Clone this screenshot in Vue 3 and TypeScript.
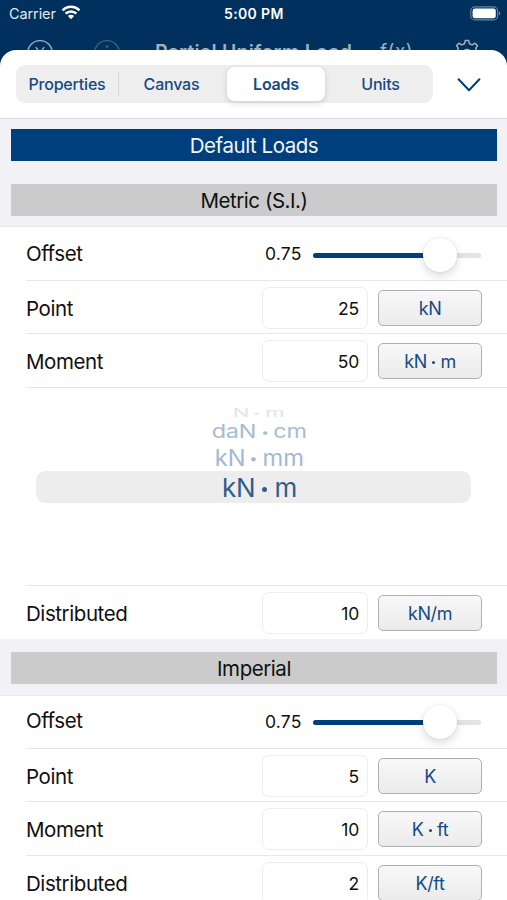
<script setup lang="ts">
import { ref } from 'vue'

interface LoadRow {
  label: string
  value: string
  unit: string[]
  picker?: boolean
}

interface LoadGroup {
  title: string
  offset: number
  rows: LoadRow[]
}

const tabs = ['Properties', 'Canvas', 'Loads', 'Units']
const active = ref('Loads')

const pickerItems = [
  { parts: ['N', 'm'], cls: 'far' },
  { parts: ['daN', 'cm'], cls: 'mid' },
  { parts: ['kN', 'mm'], cls: 'near' },
  { parts: ['kN', 'm'], cls: 'chosen' },
]

const groups: LoadGroup[] = [
  {
    title: 'Metric (S.I.)',
    offset: 0.75,
    rows: [
      { label: 'Point', value: '25', unit: ['kN'] },
      { label: 'Moment', value: '50', unit: ['kN', 'm'], picker: true },
      { label: 'Distributed', value: '10', unit: ['kN/m'] },
    ],
  },
  {
    title: 'Imperial',
    offset: 0.75,
    rows: [
      { label: 'Point', value: '5', unit: ['K'] },
      { label: 'Moment', value: '10', unit: ['K', 'ft'] },
      { label: 'Distributed', value: '2', unit: ['K/ft'] },
    ],
  },
]
</script>

<template>
  <div class="screen">
    <header class="status">
      <span class="carrier">Carrier</span>
      <svg class="wifi" width="20" height="15" viewBox="0 0 20 15">
        <g fill="none" stroke="#fff" stroke-width="2.5">
          <path d="M1.5 5.3a12.2 12.2 0 0 1 17 0" />
          <path d="M4.6 8.7a7.6 7.6 0 0 1 10.8 0" />
        </g>
        <path d="M10 14.3 6.9 11.1a4.4 4.4 0 0 1 6.2 0z" fill="#fff" />
      </svg>
      <span class="time">5:00 PM</span>
      <svg class="battery" width="31" height="15" viewBox="0 0 31 15">
        <rect x="0.8" y="0.9" width="26.8" height="13" rx="4" fill="none" stroke="#6c849c" stroke-width="1.1" />
        <rect x="2.6" y="2.6" width="23.2" height="9.6" rx="2.3" fill="#fff" />
        <path d="M28.8 5.2v4.4q1.5-.6 1.5-2.2t-1.5-2.2z" fill="#6c849c" />
      </svg>
    </header>

    <nav class="navbar">
      <svg class="close" width="28" height="28" viewBox="0 0 28 28" fill="none" stroke="#a3afba" stroke-width="1.4">
        <circle cx="14" cy="14" r="12.4" />
        <path d="m9.8 8.2 8.4 11.6M18.2 8.2 9.8 19.8" />
      </svg>
      <svg class="info" width="28" height="28" viewBox="0 0 28 28" fill="none" stroke="#3f607e" stroke-width="1.4">
        <circle cx="14" cy="14" r="12.4" />
        <circle cx="14" cy="7.6" r="0.7" fill="#3f607e" />
        <path d="M14 12v8" />
      </svg>
      <span class="title">Partial Uniform Load</span>
      <span class="fx">f(x)</span>
      <svg class="gear" width="28" height="28" viewBox="0 0 28 28" fill="none" stroke="#a3afba" stroke-width="1.5" stroke-linejoin="round">
        <path d="M11.5 4.8 12.3 1.6h3.4l.8 3.2 2.7 1.1 2.8-1.7 2.4 2.4-1.7 2.8 1.1 2.7 3.2.8v3.2l-3.2.8-1.1 2.7 1.7 2.8-2.4 2.4-2.8-1.7-2.7 1.1-.8 3.2h-3.4l-.8-3.2-2.7-1.1L6 24.8l-2.4-2.4 1.7-2.8-1.1-2.7-3.2-.8v-3.2l3.2-.8 1.1-2.7-1.7-2.8L6 4.2l2.8 1.7z" />
        <circle cx="14" cy="14.5" r="4" />
      </svg>
    </nav>

    <main class="sheet">
      <div class="toolbar">
        <div class="segments">
          <button
            v-for="tab in tabs"
            :key="tab"
            class="segment"
            :class="{ active: tab === active }"
            @click="active = tab"
          >{{ tab }}</button>
        </div>
        <svg class="chevron" width="24" height="14" viewBox="0 0 24 14" fill="none" stroke="#003f7f" stroke-width="2" stroke-linecap="round" stroke-linejoin="round">
          <path d="m1.6 1.3 10.4 11 10.4-11" />
        </svg>
      </div>

      <div class="banner">
        <h1>Default Loads</h1>
      </div>

      <section v-for="(group, g) in groups" :key="group.title" class="group" :class="{ later: g > 0 }">
        <div class="band"><h2>{{ group.title }}</h2></div>
        <div class="row offset">
          <span class="label">Offset</span>
          <span class="amount">{{ group.offset }}</span>
          <div class="slider">
            <div class="fill" :style="{ width: group.offset * 100 + '%' }"></div>
            <div class="thumb"></div>
          </div>
        </div>
        <template v-for="row in group.rows" :key="row.label">
          <div class="row" :class="row.label.toLowerCase()">
            <span class="label">{{ row.label }}</span>
            <span class="field">{{ row.value }}</span>
            <button class="unit">
              <template v-for="(part, i) in row.unit" :key="i"><i v-if="i > 0" class="dot"></i><span>{{ part }}</span></template>
            </button>
          </div>
          <div v-if="row.picker" class="picker">
            <div v-for="item in pickerItems" :key="item.cls" class="option" :class="item.cls">
              <div class="scaled"><span>{{ item.parts[0] }}</span><i class="dot"></i><span>{{ item.parts[1] }}</span></div>
            </div>
          </div>
        </template>
      </section>
    </main>
  </div>
</template>

<style>
body {
  overflow: hidden;
}
</style>

<style scoped>
.screen {
  width: 507px;
  height: 900px;
  overflow: hidden;
  display: flex;
  flex-direction: column;
  background: #00305d;
  color: #101010;
  font-family: Inter, "Liberation Sans", sans-serif;
}
.screen * {
  box-sizing: border-box;
}
button {
  font-family: inherit;
  border: 0;
  padding: 0;
}
.status {
  height: 28px;
  flex: none;
  display: grid;
  grid-template-columns: 52px 165px 1fr 31px;
  align-items: center;
  padding: 0 6px 2px 9px;
  color: #fff;
  font-size: 14.5px;
}
.carrier {
  letter-spacing: -0.1px;
  color: #e3e9ee;
}
.wifi {
  margin-top: -1px;
}
.time {
  font-weight: 600;
  font-size: 14px;
  letter-spacing: 0.35px;
  margin-left: -2px;
}
.navbar {
  flex: none;
  height: 22px;
  overflow: hidden;
  display: grid;
  grid-template-columns: 66.5px 62.5px 225px 72.5px 28px;
  padding: 11px 0 0 26px;
  color: #a3afba;
}
.title {
  font-size: 19.5px;
  line-height: 26px;
  font-weight: 600;
  letter-spacing: 0.25px;
  white-space: nowrap;
}
.fx {
  font-size: 19px;
  line-height: 25px;
  letter-spacing: 0.5px;
}
.sheet {
  flex: 1;
  min-height: 0;
  overflow: hidden;
  background: #fff;
  border-radius: 16px 16px 0 0;
}
.toolbar {
  height: 69px;
  border-bottom: 1px solid #dcdcde;
  display: flex;
  padding: 15px 0 0 16px;
}
.segments {
  width: 417px;
  height: 38px;
  border-radius: 9px;
  background: #eeeeef;
  display: grid;
  grid-template-columns: 103px 105px 104px 105px;
  padding: 2px 0;
}
.segment {
  background: transparent;
  color: #164a84;
  font-size: 16px;
  font-weight: 500;
  letter-spacing: -0.2px;
}
.segment:first-child {
  border-right: 1px solid #d4d4d6;
  height: 22px;
  margin-top: 6px;
}
.segment.active {
  width: 98px;
  height: 34px;
  margin-left: 3px;
  border-radius: 8px;
  background: #fff;
  font-weight: 600;
  box-shadow: 0 2px 6px rgba(0, 0, 0, 0.15);
}
.chevron {
  margin: 13px 0 0 24px;
}
.banner {
  background: #f1f1f6;
  padding: 10px 10px 9px 11px;
}
h1,
h2 {
  margin: 0;
  height: 32px;
  line-height: 34px;
  font-size: 20.5px;
  font-weight: 400;
  letter-spacing: -0.45px;
  text-align: center;
}
h1 {
  background: #003f7e;
  color: #f2f6fa;
}
h2 {
  background: #cbcbcb;
}
.band {
  height: 57px;
  padding: 14px 10px 0 11px;
  background: #f1f1f6;
  border-bottom: 1px solid #e9e9ec;
}
.later .band {
  padding-top: 13px;
}
.row {
  height: 54px;
  display: flex;
  align-items: center;
  padding-left: 26px;
  background: linear-gradient(#e7e7e9, #e7e7e9) 26px 100% / 100% 1px no-repeat;
}
.row.point,
.row.distributed {
  height: 53px;
}
.row.distributed {
  background: none;
}
.later .row.offset {
  height: 53px;
  padding-bottom: 2px;
}
.label {
  width: 236px;
  font-size: 20.5px;
  letter-spacing: -0.42px;
  padding-top: 1px;
}
.offset .label {
  width: 239px;
  padding: 0 0 2px;
}
.amount {
  width: 48px;
  font-size: 17.5px;
  letter-spacing: 0.2px;
  padding-bottom: 1px;
}
.slider {
  width: 168px;
  height: 5px;
  margin-top: 2px;
  border-radius: 3px;
  background: #e3e3e4;
  display: flex;
  align-items: center;
}
.fill {
  height: 5px;
  border-radius: 3px;
  background: #003f7e;
}
.thumb {
  flex: none;
  width: 34px;
  height: 34px;
  margin: -1px 0 0 -16px;
  border-radius: 50%;
  background: #fff;
  box-shadow: 0 4px 10px rgba(0, 0, 0, 0.14), 0 0 2px rgba(0, 0, 0, 0.1);
}
.field {
  width: 106px;
  height: 42px;
  border: 1px solid #ededee;
  border-radius: 7px;
  font-size: 17.5px;
  line-height: 41px;
  letter-spacing: -0.2px;
  padding-right: 8px;
  text-align: right;
}
.unit {
  width: 104px;
  height: 36px;
  margin-left: 10px;
  border: 1.5px solid #b0b0b2;
  border-radius: 5px;
  background: linear-gradient(#f8f8f8, #ebebeb);
  color: #164a84;
  font-size: 18px;
  letter-spacing: -0.4px;
  display: flex;
  align-items: center;
  justify-content: center;
  padding-top: 1px;
}
.dot {
  width: 3.5px;
  height: 3.5px;
  margin: 2px 5px 0;
  border-radius: 50%;
  background: currentColor;
}
.picker {
  height: 198px;
  padding: 19px 36px 0;
  background: linear-gradient(#e7e7e9, #e7e7e9) 26px 100% / 100% 1px no-repeat;
}
.option {
  display: flex;
  align-items: center;
  justify-content: center;
  color: #a8bbd1;
}
.scaled {
  display: flex;
  align-items: center;
  font-size: 26px;
  line-height: 26px;
  letter-spacing: -0.2px;
  white-space: nowrap;
  padding-left: 12px;
}
.scaled .dot {
  width: 5px;
  height: 5px;
  margin: 3px 7px 0;
}
.far {
  height: 12px;
  color: #e2e5e9;
}
.far .scaled {
  transform: scale(0.85, 0.45);
}
.mid {
  height: 26px;
}
.mid .scaled {
  transform: scale(0.9, 0.72);
}
.near {
  height: 26px;
  color: #a5b8d0;
}
.near .scaled {
  transform: scale(0.91, 0.88);
}
.chosen {
  height: 32px;
  width: 435px;
  border-radius: 9px;
  background: #ededed;
  color: #315d8f;
}
.chosen .scaled {
  padding-top: 1px;
}
</style>
